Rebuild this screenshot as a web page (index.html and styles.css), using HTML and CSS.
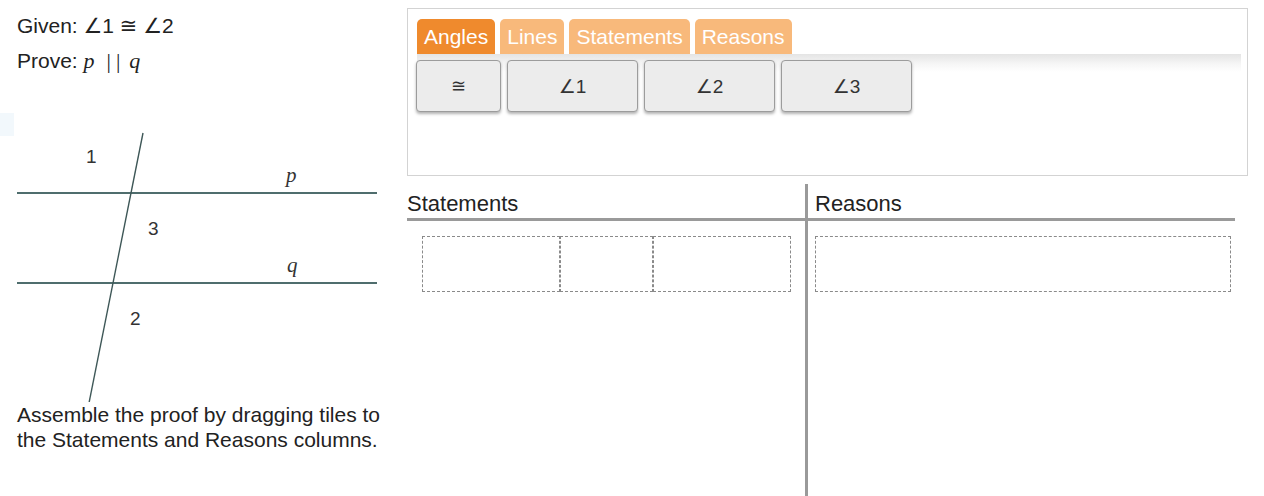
FILE: index.html
```html
<!DOCTYPE html>
<html>
<head>
<meta charset="utf-8">
<title>Proof</title>
<link rel="stylesheet" href="styles.css">
</head>
<body>
<div class="page">
  <div class="left">
    <p class="txt given">Given: ∠1 ≅ ∠2</p>
    <p class="txt prove">Prove: <i class="m">p</i><span class="par">||</span><i class="m">q</i></p>
    <svg class="fig" width="390" height="302" viewBox="0 0 390 302">
      <rect x="0" y="13" width="14" height="23" fill="#f2f8fc"/>
      <line x1="17" y1="93" x2="377" y2="93" stroke="#4f6d6d" stroke-width="2"/>
      <line x1="17" y1="183" x2="377" y2="183" stroke="#4f6d6d" stroke-width="2"/>
      <line x1="143" y1="33" x2="89" y2="303" stroke="#3f5858" stroke-width="1.4"/>
      <text class="num" x="86" y="63">1</text>
      <text class="num" x="148" y="135">3</text>
      <text class="num" x="130" y="225">2</text>
      <text class="var" x="286" y="82">p</text>
      <text class="var" x="287" y="172">q</text>
    </svg>
    <p class="txt hint">Assemble the proof by dragging tiles to<br>the Statements and Reasons columns.</p>
  </div>
  <div class="right">
    <div class="bank">
      <div class="tabs">
        <div class="tab active">Angles</div>
        <div class="tab">Lines</div>
        <div class="tab">Statements</div>
        <div class="tab">Reasons</div>
      </div>
      <div class="strip">
        <div class="tiles">
          <div class="tile narrow">≅</div>
          <div class="tile">∠1</div>
          <div class="tile">∠2</div>
          <div class="tile">∠3</div>
        </div>
      </div>
    </div>
    <div class="proof">
      <div class="col stmts">
        <div class="head">Statements</div>
        <div class="row">
          <div class="cell wide"></div>
          <div class="cell mid"></div>
          <div class="cell wide"></div>
        </div>
      </div>
      <div class="col reasons">
        <div class="head">Reasons</div>
        <div class="rbox"></div>
      </div>
    </div>
  </div>
</div>
</body>
</html>
```

FILE: styles.css
```css
* { box-sizing: border-box; }

body {
  margin: 0;
  font-family: "Liberation Sans", Arial, "DejaVu Sans", sans-serif;
  color: #222;
  background: #fff;
}

.page {
  display: flex;
  align-items: flex-start;
}

.left {
  width: 407px;
  flex: none;
}

.txt {
  margin: 0;
  padding-left: 17px;
  font-size: 21px;
  line-height: 25px;
}

.given { margin-top: 13px; }
.prove { margin-top: 10px; }

.m {
  font-family: "Liberation Serif", "Times New Roman", serif;
  font-style: italic;
  font-size: 22px;
}

.par {
  font-family: "Liberation Serif", "Times New Roman", serif;
  font-size: 22px;
  letter-spacing: 5px;
  margin: 0 4px 0 12px;
}

.fig {
  display: block;
  margin-top: 27px;
}

.num {
  font-family: "Liberation Sans", Arial, sans-serif;
  font-size: 19px;
  fill: #333;
}

.var {
  font-family: "Liberation Serif", "Times New Roman", serif;
  font-style: italic;
  font-size: 21px;
  fill: #333;
}

.right {
  width: 841px;
  flex: none;
  margin-top: 8px;
}

.bank {
  height: 168px;
  border: 1px solid #d3d3d3;
  padding: 10px 6px 0 9px;
}

.tabs {
  display: flex;
  gap: 5px;
  height: 35px;
}

.tab {
  padding: 0 7px;
  line-height: 36px;
  font-size: 21px;
  color: #fff;
  background: #f8b97b;
  border-radius: 5px 5px 0 0;
}

.tab.active {
  background: #ef8a2d;
}

.strip {
  height: 80px;
  padding-top: 6px;
  background: linear-gradient(#e4e4e4 0, #f6f6f6 10px, #fff 18px);
}

.tiles {
  display: flex;
  gap: 6px;
  margin-left: -1px;
}

.tile {
  width: 131px;
  height: 52px;
  display: flex;
  align-items: center;
  justify-content: center;
  background: #ececec;
  border: 1px solid #9c9c9c;
  border-radius: 4px;
  box-shadow: 0 2px 3px rgba(0, 0, 0, 0.3);
  font-family: "Liberation Sans", Arial, "DejaVu Sans", sans-serif;
  font-size: 19px;
  color: #333;
}

.tile.narrow {
  width: 85px;
  font-size: 18px;
}

.proof {
  display: flex;
  margin-top: 8px;
  height: 312px;
}

.col.stmts {
  width: 398px;
}

.col.reasons {
  width: 430px;
  border-left: 3px solid #9a9a9a;
}

.head {
  font-size: 22px;
  line-height: 25px;
  padding-top: 7px;
  padding-bottom: 2px;
  border-bottom: 3px solid #9a9a9a;
}

.reasons .head {
  padding-left: 7px;
}

.row {
  display: flex;
  margin: 15px 0 0 15px;
}

.cell {
  height: 56px;
  border: 1px dashed #8a8a8a;
}

.cell.wide { width: 138px; }
.cell.mid { width: 93px; }

.rbox {
  height: 56px;
  margin: 15px 4px 0 7px;
  border: 1px dashed #8a8a8a;
}
```
